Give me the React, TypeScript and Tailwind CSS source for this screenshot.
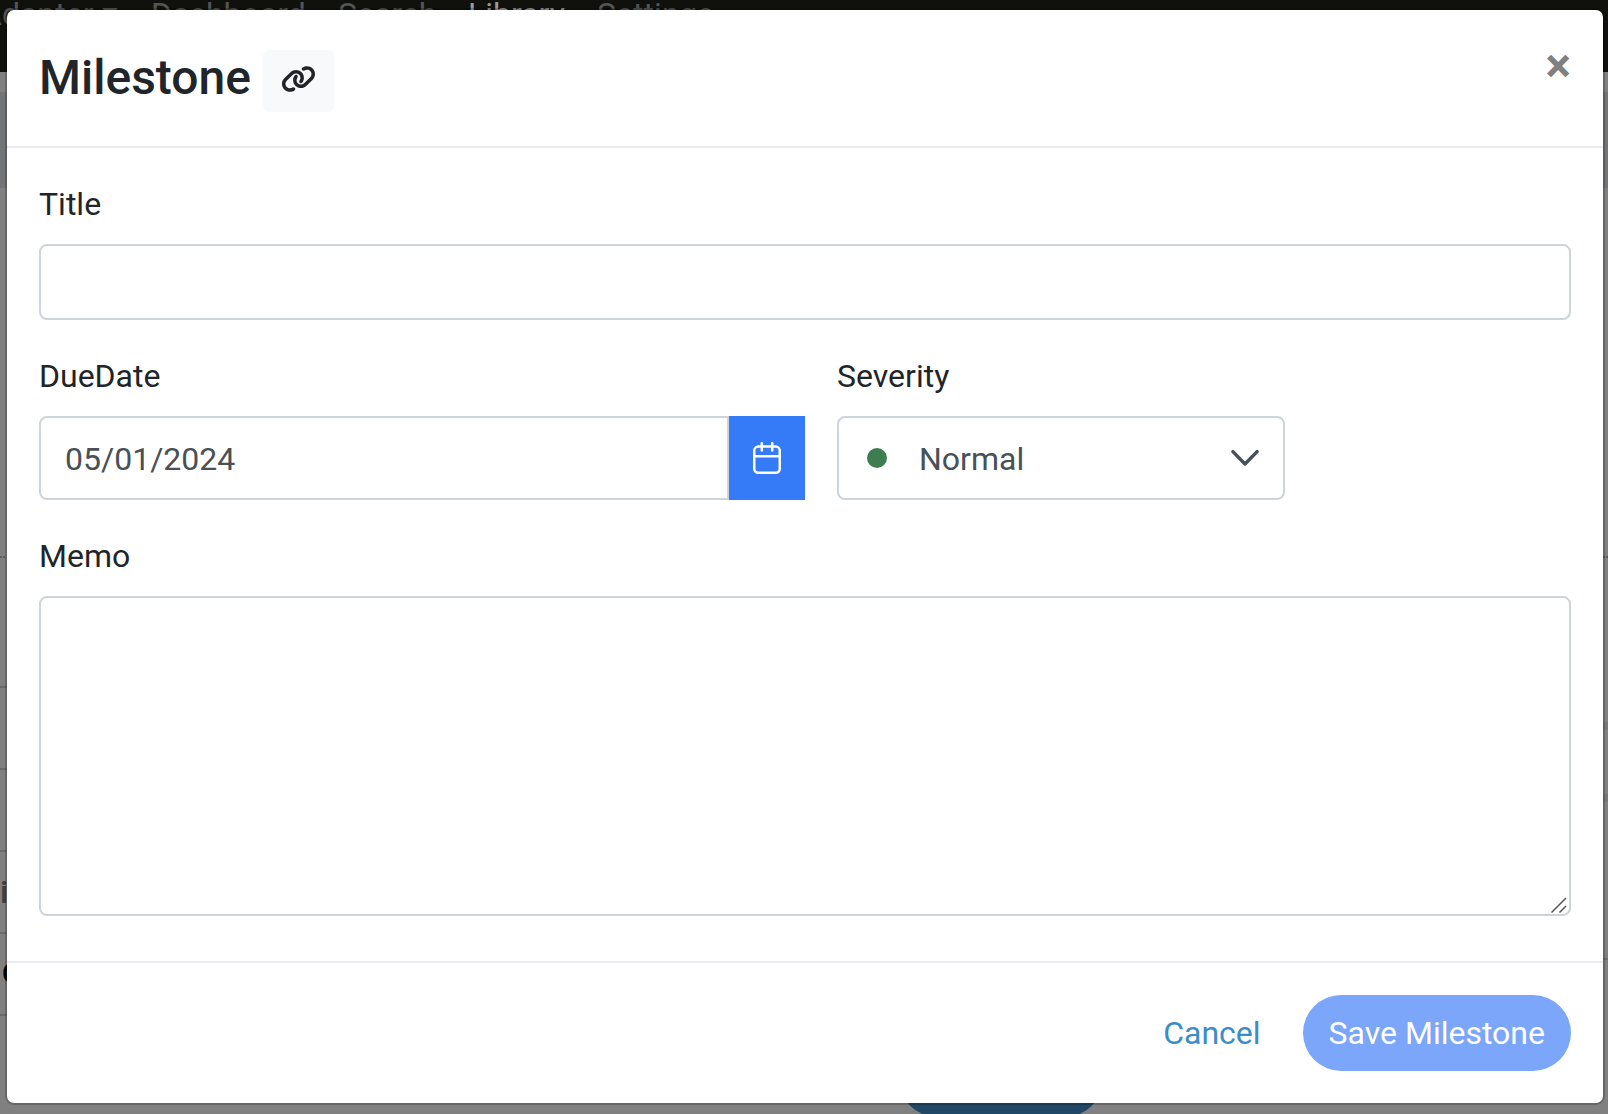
import { FaLink } from "react-icons/fa6";

const navLink = "text-[#555555]";

function Backdrop() {
  return (
    <div aria-hidden="true" className="absolute inset-0 flex flex-col overflow-hidden bg-[#808080]">
      <div className="h-[72px] shrink-0 bg-[#10100d] text-[32px] leading-[28px] whitespace-nowrap">
        <div className="-ml-[19px] flex">
          <span className={`${navLink} flex w-[170px] items-start gap-2`}>
            Adapter
            <svg width="16" height="8" viewBox="0 0 16 8" className="mt-2" fill="currentColor">
              <path d="M0 0H16L8 8Z" />
            </svg>
          </span>
          <span className={`${navLink} w-[187px]`}>Dashboard</span>
          <span className={`${navLink} w-[130px]`}>Search</span>
          <span className="w-[129px] text-[#999999]">Library</span>
          <span className={navLink}>Settings</span>
        </div>
      </div>
      <div className="mt-5 h-24 shrink-0 bg-[#737475]" />
      <div className="mt-[368px] border-t-2 border-dotted border-[#5c5c5c]" />
      <div className="flex flex-1">
        <div className="w-[1145px] shrink-0 pt-32">
          <div className="h-[82px] border-t-2 border-[#6b6c6d]" />
          <div className="h-[82px] border-t-2 border-[#6b6c6d]" />
          <div className="flex h-[82px] items-center border-t-2 border-[#6b6c6d] text-[32px] text-[#404040]">
            <span className="font-medium">i</span>
          </div>
          <div className="flex h-[82px] items-center border-t-2 border-[#6b6c6d] pl-0.5 text-[28px] text-black">
            <span className="font-medium">O</span>
          </div>
          <div className="flex justify-end border-t-2 border-[#6b6c6d] pt-[25px] pr-[42px]">
            <div className="h-[76px] w-[204px] rounded-full bg-[#214766]" />
          </div>
        </div>
        <div className="flex-1 pt-[164px]">
          <div className="h-2 bg-[#777777]" />
          <div className="mt-16 h-2 bg-[#777777]" />
          <div className="mt-[156px] h-0.5 bg-[#6b6c6d]" />
        </div>
      </div>
    </div>
  );
}

function CalendarIcon() {
  return (
    <svg width="28" height="32" viewBox="0 0 28 32" fill="none" stroke="currentColor" strokeWidth="2.5" strokeLinecap="round" aria-hidden="true">
      <rect x="1.25" y="4.6" width="25.5" height="26.1" rx="4" />
      <path d="M1.25 14.2H26.75M8.8 1.3V8.6M19.2 1.3V8.6" />
    </svg>
  );
}

const label = "mb-4 block text-[32px] leading-[48px] text-[#212529]";
const field = "block w-full border-2 border-[#ced4da] bg-white px-6 pt-0.5 text-[32px] text-[#495057] outline-none";

export default function App() {
  return (
    <div className="relative min-h-screen overflow-hidden pt-2 pr-[3px] pb-[9px] pl-[5px] font-[Roboto,sans-serif]">
      <Backdrop />
      <div
        role="dialog"
        aria-modal="true"
        aria-labelledby="dialog-title"
        className="relative rounded-[9px] border-2 border-black/20 bg-white bg-clip-padding"
      >
        <header className="flex items-start justify-between border-b-2 border-[#e9ebf0] p-8">
          <div className="flex items-start gap-3">
            <h1 id="dialog-title" className="text-[48px] leading-[72px] font-medium text-[#212529]">
              Milestone
            </h1>
            <button
              type="button"
              aria-label="Copy link"
              className="mt-2 flex h-[62px] w-[71px] items-center justify-center rounded-md bg-[#f8f9fb] pb-1 text-[#212529]"
            >
              <FaLink className="h-7 w-[35px]" />
            </button>
          </div>
          <button type="button" aria-label="Close" className="text-[48px] leading-[48px] font-bold text-[#808080]">
            ×
          </button>
        </header>

        <form id="milestone-form" className="px-8 pt-8 pb-[45px]">
          <label htmlFor="title" className={label}>
            Title
          </label>
          <input id="title" type="text" className={`${field} h-[76px] rounded-lg`} />

          <div className="mt-8 flex gap-8">
            <div className="w-1/2">
              <label htmlFor="due" className={label}>
                DueDate
              </label>
              <div className="flex">
                <input id="due" type="text" defaultValue="05/01/2024" className={`${field} h-[84px] min-w-0 rounded-l-lg`} />
                <button
                  type="button"
                  aria-label="Choose date"
                  className="flex h-[84px] w-[76px] shrink-0 items-center justify-center bg-[#357af6] text-white"
                >
                  <CalendarIcon />
                </button>
              </div>
            </div>
            <div className="w-[448px]">
              <label htmlFor="severity" className={label}>
                Severity
              </label>
              <div className="relative">
                <select id="severity" defaultValue="Normal" className={`${field} h-[84px] appearance-none rounded-lg pl-20`}>
                  <option>Normal</option>
                </select>
                <span className="pointer-events-none absolute inset-y-0 left-[30px] my-auto size-5 rounded-full bg-[#3d7d4f]" />
                <svg
                  width="28"
                  height="18"
                  viewBox="0 0 28 18"
                  fill="none"
                  stroke="#495057"
                  strokeWidth="3.4"
                  strokeLinecap="round"
                  strokeLinejoin="round"
                  aria-hidden="true"
                  className="pointer-events-none absolute inset-y-0 right-[26px] my-auto"
                >
                  <path d="M1.9 2.6L14 15L26.1 2.6" />
                </svg>
              </div>
            </div>
          </div>

          <label htmlFor="memo" className={`${label} mt-8`}>
            Memo
          </label>
          <div className="relative">
            <textarea id="memo" className={`${field} h-80 resize-none rounded-lg pb-3`} />
            <svg
              width="16"
              height="16"
              viewBox="0 0 16 16"
              stroke="#555555"
              strokeWidth="1.5"
              aria-hidden="true"
              className="pointer-events-none absolute right-1 bottom-[3px]"
            >
              <path d="M0.5 15.5L15 1M8.5 15.5L15 9" />
            </svg>
          </div>
        </form>

        <footer className="flex justify-end gap-4 border-t-2 border-[#e9ebf0] p-8 text-[32px]">
          <button type="button" className="h-[76px] px-[26px] text-[#3b8ccb]">
            Cancel
          </button>
          <button type="submit" form="milestone-form" className="h-[76px] rounded-full bg-[#7ba6f9] px-[26px] text-white">
            Save Milestone
          </button>
        </footer>
      </div>
    </div>
  );
}
